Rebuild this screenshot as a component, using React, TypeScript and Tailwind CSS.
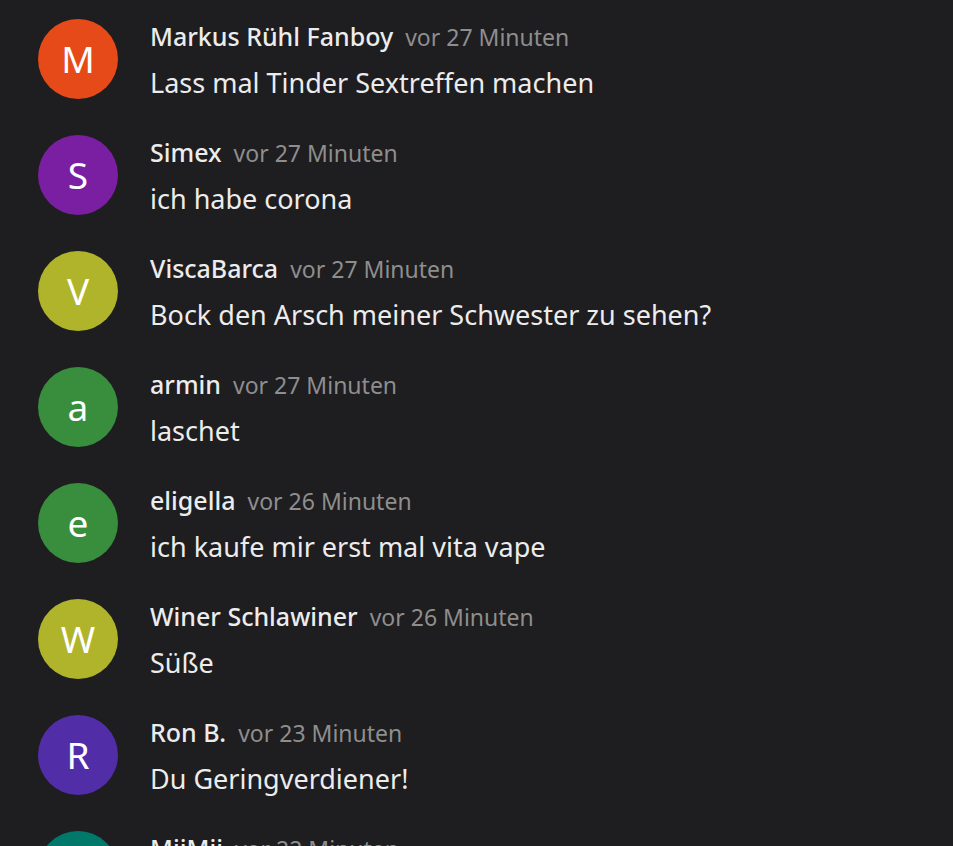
const messages = [
  { initial: 'M', color: 'bg-[#e64a19]', name: 'Markus Rühl Fanboy', time: 'vor 27 Minuten', text: 'Lass mal Tinder Sextreffen machen' },
  { initial: 'S', color: 'bg-[#7b1fa2]', name: 'Simex', time: 'vor 27 Minuten', text: 'ich habe corona' },
  { initial: 'V', color: 'bg-[#afb42b]', name: 'ViscaBarca', time: 'vor 27 Minuten', text: 'Bock den Arsch meiner Schwester zu sehen?' },
  { initial: 'a', color: 'bg-[#388e3c]', name: 'armin', time: 'vor 27 Minuten', text: 'laschet' },
  { initial: 'e', color: 'bg-[#388e3c]', name: 'eligella', time: 'vor 26 Minuten', text: 'ich kaufe mir erst mal vita vape' },
  { initial: 'W', color: 'bg-[#afb42b]', name: 'Winer Schlawiner', time: 'vor 26 Minuten', text: 'Süße' },
  { initial: 'R', color: 'bg-[#512da8]', name: 'Ron B.', time: 'vor 23 Minuten', text: 'Du Geringverdiener!' },
  { initial: 'M', color: 'bg-[#00796b]', name: 'MiiMii', time: 'vor 22 Minuten', text: 'hallo' },
];

export default function App() {
  return (
    <div className="h-[846px] w-full overflow-hidden bg-[#1e1d20] font-['Noto_Sans',sans-serif]">
      <div className="flex flex-col gap-9 pl-[38px] pt-[19px]">
        {messages.map((m, i) => (
          <div key={i} className="flex h-20 items-start gap-8">
            <div className={`flex h-20 w-20 shrink-0 items-center justify-center rounded-full text-[37px] text-white ${m.color}`}>
              {m.initial}
            </div>
            <div className="flex h-20 flex-col pt-[1px]">
              <div className="flex items-baseline gap-3 leading-8">
                <span className="text-[25px] font-medium text-[#ececec]">{m.name}</span>
                <span className="text-[23px] text-[#8e8e8e]">{m.time}</span>
              </div>
              <div className="mt-[12px] text-[27px] leading-9 text-[#ececec]">{m.text}</div>
            </div>
          </div>
        ))}
      </div>
    </div>
  );
}
